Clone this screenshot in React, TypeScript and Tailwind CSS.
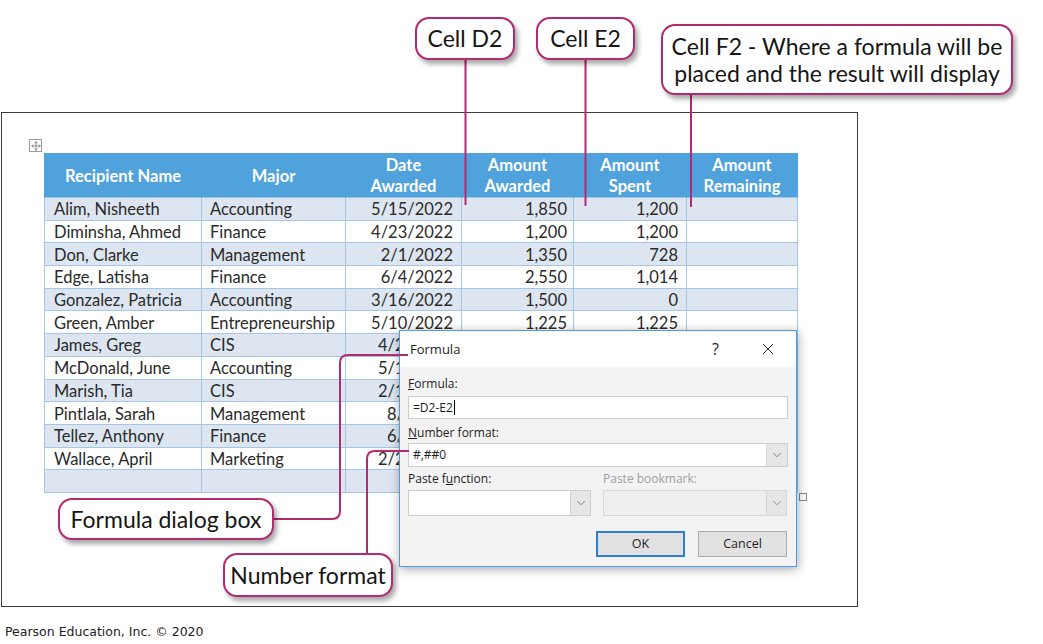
import { X, ChevronDown, Move } from "lucide-react";

// rows 7-12 are partly behind the dialog: only the visible start of the date shows
const rows: { name: string; major: string; date: string; awarded: string; spent: string; cut?: "long" | "short" }[] = [
  { name: "Alim, Nisheeth", major: "Accounting", date: "5/15/2022", awarded: "1,850", spent: "1,200" },
  { name: "Diminsha, Ahmed", major: "Finance", date: "4/23/2022", awarded: "1,200", spent: "1,200" },
  { name: "Don, Clarke", major: "Management", date: "2/1/2022", awarded: "1,350", spent: "728" },
  { name: "Edge, Latisha", major: "Finance", date: "6/4/2022", awarded: "2,550", spent: "1,014" },
  { name: "Gonzalez, Patricia", major: "Accounting", date: "3/16/2022", awarded: "1,500", spent: "0" },
  { name: "Green, Amber", major: "Entrepreneurship", date: "5/10/2022", awarded: "1,225", spent: "1,225" },
  { name: "James, Greg", major: "CIS", date: "4/2", awarded: "", spent: "", cut: "long" },
  { name: "McDonald, June", major: "Accounting", date: "5/1", awarded: "", spent: "", cut: "long" },
  { name: "Marish, Tia", major: "CIS", date: "2/1", awarded: "", spent: "", cut: "long" },
  { name: "Pintlala, Sarah", major: "Management", date: "8/", awarded: "", spent: "", cut: "short" },
  { name: "Tellez, Anthony", major: "Finance", date: "6/", awarded: "", spent: "", cut: "short" },
  { name: "Wallace, April", major: "Marketing", date: "2/2", awarded: "", spent: "", cut: "long" },
  { name: "", major: "", date: "", awarded: "", spent: "" },
];

const headers = [
  ["Recipient Name"],
  ["Major"],
  ["Date", "Awarded"],
  ["Amount", "Awarded"],
  ["Amount", "Spent"],
  ["Amount", "Remaining"],
];

const cell = "border border-[#a3c7e8] pb-0 pt-[2px] leading-[19px]";

function Callout({ className, children }: { className: string; children: React.ReactNode }) {
  return (
    <div
      className={
        "absolute z-30 flex flex-col items-center justify-center rounded-[14px] border-2 border-[#b12a72] bg-white text-center font-['Lato',sans-serif] text-[23px] leading-[27px] text-[#161616] shadow-[3px_4px_5px_rgba(0,0,0,0.35)] " +
        className
      }
    >
      {children}
    </div>
  );
}

export default function App() {
  return (
    <div className="relative h-[644px] w-[1043px] overflow-hidden bg-white">
      <div className="pl-[1px] pt-[112px]">
        {/* document frame */}
        <div className="h-[495px] w-[857px] border border-[#3c3c3c]">
          <div className="ml-[27px] mt-[26px] flex h-[13px] w-[13px] items-center justify-center border border-[#9a9a9a] bg-white text-[#555]">
            <Move size={10} strokeWidth={1.5} />
          </div>
          <table className="ml-[42px] mt-[1px] table-fixed border-collapse font-['Lato',sans-serif] text-[16.5px] text-[#2a2a2a]">
            <colgroup>
              <col className="w-[157px]" />
              <col className="w-[144px]" />
              <col className="w-[116px]" />
              <col className="w-[112px]" />
              <col className="w-[113px]" />
              <col className="w-[111px]" />
            </colgroup>
            <thead>
              <tr className="h-[44px] bg-[#4fa2dc]">
                {headers.map((h, i) => (
                  <th key={i} className="border-x border-[#4fa2dc] px-0 pb-0 pt-[2px] text-center text-[16.5px] font-bold leading-[21px] text-white">
                    {h.map((l) => (
                      <div key={l}>{l}</div>
                    ))}
                  </th>
                ))}
              </tr>
            </thead>
            <tbody>
              {rows.map((r, i) => (
                <tr key={i} className={"h-[22.7px] " + (i % 2 === 0 ? "bg-[#dde6f0]" : "bg-white")}>
                  <td className={cell + " pl-[9px]"}>{r.name}</td>
                  <td className={cell + " pl-[8px]"}>{r.major}</td>
                  <td
                    className={
                      cell +
                      (r.cut === "long" ? " pl-[32px] text-left" : r.cut === "short" ? " pl-[41px] text-left" : " pr-[8px] text-right")
                    }
                  >
                    {r.date}
                  </td>
                  <td className={cell + " pr-[6px] text-right"}>{r.awarded}</td>
                  <td className={cell + " pr-[8px] text-right"}>{r.spent}</td>
                  <td className={cell}></td>
                </tr>
              ))}
            </tbody>
          </table>
        </div>
        <div className="ml-[4px] mt-[18px] font-['DejaVu_Sans',sans-serif] text-[12.5px] leading-[14px] text-[#222]">
          Pearson Education, Inc. © 2020
        </div>
      </div>

      {/* end of row marker */}
      <div className="absolute left-[799px] top-[493px] h-[8px] w-[8px] border border-[#8a8a8a]" />

      {/* Formula dialog */}
      <div className="absolute left-[399px] top-[330px] z-10 flex h-[237px] w-[398px] flex-col border border-[#4d9be0] bg-[#f3f3f3] font-['Open_Sans',sans-serif] text-[12px] leading-[16px] text-[#1e1e1e] shadow-[1px_2px_10px_rgba(0,0,0,0.35)]">
        <div className="flex h-[36px] shrink-0 items-center bg-white pl-[10px] pr-[19px]">
          <span className="text-[13px]">Formula</span>
          <span className="ml-auto mr-[40px] text-[16px]">?</span>
          <X size={18} strokeWidth={1.3} />
        </div>
        <div className="flex flex-col px-[8px] pt-[9px]">
          <div className="h-[16px]">
            <span className="underline">F</span>ormula:
          </div>
          <div className="mt-[4px] flex h-[23px] items-center border border-[#cdcdcd] bg-white px-[4px] leading-none">
            =D2-E2<span className="ml-[1px] h-[15px] w-[1px] bg-black" />
          </div>
          <div className="mt-[6px] h-[16px]">
            <span className="underline">N</span>umber format:
          </div>
          <div className="mt-[2px] flex h-[24px] items-center border border-[#cdcdcd] bg-white leading-none">
            <span className="pl-[4px]">#,##0</span>
            <div className="ml-auto flex h-full w-[21px] items-center justify-center border-l border-[#d6d6d6] bg-[#e6e6e6] text-[#666]">
              <ChevronDown size={14} strokeWidth={1.4} />
            </div>
          </div>
          <div className="mt-[4px] flex h-[16px] gap-[12px]">
            <div className="w-[183px]">
              Paste f<span className="underline">u</span>nction:
            </div>
            <div className="text-[#a0a0a0]">Paste bookmark:</div>
          </div>
          <div className="mt-[3px] flex gap-[12px]">
            <div className="flex h-[26px] w-[183px] border border-[#cdcdcd] bg-white">
              <div className="ml-auto flex h-full w-[20px] items-center justify-center border-l border-[#d6d6d6] bg-[#e6e6e6] text-[#666]">
                <ChevronDown size={14} strokeWidth={1.4} />
              </div>
            </div>
            <div className="flex h-[26px] w-[184px] border border-[#d8d8d8] bg-[#efefef]">
              <div className="ml-auto flex h-full w-[20px] items-center justify-center border-l border-[#d6d6d6] bg-[#e6e6e6] text-[#777]">
                <ChevronDown size={14} strokeWidth={1.4} />
              </div>
            </div>
          </div>
          <div className="mt-[15px] flex justify-end gap-[13px] pr-[1px]">
            <button className="h-[26px] w-[89px] border-2 border-[#2a7fd0] bg-[#e1e1e1] text-[12.5px] leading-none">OK</button>
            <button className="h-[26px] w-[89px] border border-[#adadad] bg-[#e1e1e1] text-[12.5px] leading-none">Cancel</button>
          </div>
        </div>
      </div>

      {/* leader lines */}
      <svg className="pointer-events-none absolute left-0 top-0 z-20" width="1043" height="644" fill="none" stroke="#b12a72" strokeWidth="2">
        <path d="M465.5 58 V205" />
        <path d="M585.5 58 V206" />
        <path d="M691 94 V207" />
        <path d="M273 519 H332 Q340 519 340 511 V363 Q340 355 348 355 H408" />
        <path d="M367 554 V459 Q367 451 375 451 H409" />
      </svg>

      {/* callouts */}
      <Callout className="left-[415px] top-[17px] h-[43px] w-[100px]">Cell D2</Callout>
      <Callout className="left-[536px] top-[17px] h-[43px] w-[99px]">Cell E2</Callout>
      <Callout className="left-[661px] top-[24px] h-[71px] w-[352px]">
        <div>Cell F2 - Where a formula will be</div>
        <div>placed and the result will display</div>
      </Callout>
      <Callout className="left-[58px] top-[498px] h-[42px] w-[216px]">Formula dialog box</Callout>
      <Callout className="left-[223px] top-[553px] h-[44px] w-[170px]">Number format</Callout>
    </div>
  );
}
